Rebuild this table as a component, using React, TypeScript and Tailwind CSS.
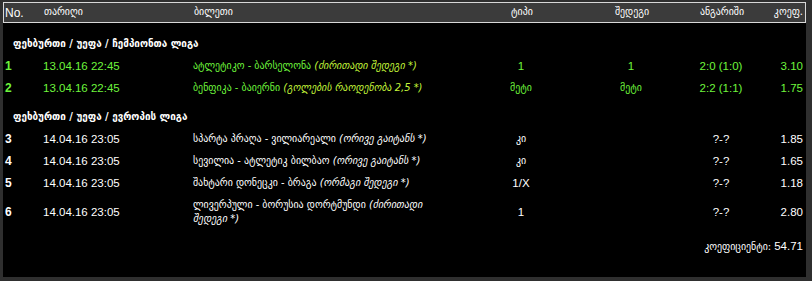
import React from 'react';

interface Bet {
  no: number;
  date: string;
  match: string;
  market: string[];
  type: string;
  result: string;
  score: string;
  coef: string;
  won?: boolean;
}

const geo = "font-['DejaVu_Sans_Condensed','DejaVu_Sans',sans-serif]";
const lat = "font-['Liberation_Sans_Narrow','Liberation_Sans',Arial,sans-serif]";

const groups: { title: string; bets: Bet[] }[] = [
  {
    title: 'ფეხბურთი / უეფა / ჩემპიონთა ლიგა',
    bets: [
      { no: 1, date: '13.04.16 22:45', match: 'ატლეტიკო - ბარსელონა', market: ['ძირითადი შედეგი *'], type: '1', result: '1', score: '2:0 (1:0)', coef: '3.10', won: true },
      { no: 2, date: '13.04.16 22:45', match: 'ბენფიკა - ბაიერნი', market: ['გოლების რაოდენობა 2,5 *'], type: 'მეტი', result: 'მეტი', score: '2:2 (1:1)', coef: '1.75', won: true },
    ],
  },
  {
    title: 'ფეხბურთი / უეფა / ევროპის ლიგა',
    bets: [
      { no: 3, date: '14.04.16 23:05', match: 'სპარტა პრაღა - ვილიარეალი', market: ['ორივე გაიტანს *'], type: 'კი', result: '', score: '?-?', coef: '1.85' },
      { no: 4, date: '14.04.16 23:05', match: 'სევილია - ატლეტიკ ბილბაო', market: ['ორივე გაიტანს *'], type: 'კი', result: '', score: '?-?', coef: '1.65' },
      { no: 5, date: '14.04.16 23:05', match: 'შახტარი დონეცკი - ბრაგა', market: ['ორმაგი შედეგი *'], type: '1/X', result: '', score: '?-?', coef: '1.18' },
      // this one is too long for the column and wraps in the original
      { no: 6, date: '14.04.16 23:05', match: 'ლივერპული - ბორუსია დორტმუნდი', market: ['ძირითადი', 'შედეგი *'], type: '1', result: '', score: '?-?', coef: '2.80' },
    ],
  },
];

const cols = 'grid grid-cols-[40px_150px_247px_162px_58px_122px_minmax(0,1fr)]';

// numbers use the latin face, georgian words the condensed one
const face = (s: string) => (/^[\d/X]+$/.test(s) ? lat : `${geo} text-[11px]`);

function Row({ bet }: { bet: Bet }) {
  const main = bet.won ? 'text-[#6ef53c]' : 'text-white';
  const sub = bet.won ? 'text-[#c4f53a]' : 'text-white';
  const [first, rest] = bet.market;
  return (
    <div className={`${cols} items-center min-h-[22px] py-[4px] text-[11.5px] leading-[14px] ${main}`}>
      <div className={`${lat} font-bold pl-[2px] text-[12px]`}>{bet.no}</div>
      <div className={lat}>{bet.date}</div>
      <div className={`${geo} text-[11px] whitespace-nowrap`}>
        {bet.match} <span className={`italic ${sub}`}>({first}</span>
        {rest ? (
          <>
            <br />
            <span className={`italic ${sub}`}>{rest})</span>
          </>
        ) : (
          <span className={`italic ${sub}`}>)</span>
        )}
      </div>
      <div className={`text-center ${face(bet.type)}`}>{bet.type}</div>
      <div className={`text-center ${face(bet.result)}`}>{bet.result}</div>
      <div className={`text-center ${lat}`}>{bet.score}</div>
      <div className={`flex justify-end pr-[3px] ${lat}`}>{bet.coef}</div>
    </div>
  );
}

export default function App() {
  return (
    <div className="w-[812px] h-[281px] bg-[#2f2f2f] pt-[2px] pl-[3px] overflow-hidden">
      <div className="w-[803px] h-[275px] bg-black">
        <div className={`${cols} items-center h-[21px] bg-[#3b3b3b] border border-[#d8d8d8] text-white text-[11px]`}>
          <div className={`${lat} text-[12px] pl-[1px]`}>No.</div>
          <div className={geo}>თარიღი</div>
          <div className={geo}>ბილეთი</div>
          <div className={`${geo} text-center`}>ტიპი</div>
          <div className={`${geo} text-center`}>შედეგი</div>
          <div className={`${geo} text-center`}>ანგარიში</div>
          <div className={`${geo} flex justify-end pr-[2px] whitespace-nowrap`}>კოეფ.</div>
        </div>

        {groups.map((g, i) => (
          <div key={g.title} className={i === 0 ? 'mt-[10px]' : 'mt-[7px]'}>
            <div className={`${geo} h-[22px] flex items-center pl-[10px] text-white font-bold text-[11px]`}>
              {g.title}
            </div>
            {g.bets.map(b => (
              <Row key={b.no} bet={b} />
            ))}
          </div>
        ))}

        <div className="flex justify-end pr-[3px] mt-[6px] h-[22px] items-center text-white text-[11.5px]">
          <span className={`${geo} text-[11px]`}>კოეფიციენტი:</span>
          <span className={`${lat} ml-[3px]`}>54.71</span>
        </div>
      </div>
    </div>
  );
}
